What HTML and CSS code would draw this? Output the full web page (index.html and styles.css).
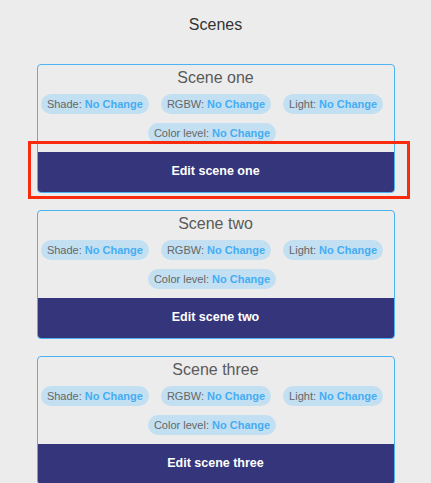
FILE: index.html
```html
<!DOCTYPE html>
<html>
<head>
<meta charset="utf-8">
<link rel="stylesheet" href="styles.css">
</head>
<body>
<div class="page">
  <h1 class="header">Scenes</h1>

  <div class="card">
    <div class="card-title">Scene one</div>
    <div class="chips">
      <span class="chip"><span class="lbl">Shade:</span> <b class="val">No Change</b></span>
      <span class="chip"><span class="lbl">RGBW:</span> <b class="val">No Change</b></span>
      <span class="chip"><span class="lbl">Light:</span> <b class="val">No Change</b></span>
      <span class="chip"><span class="lbl">Color level:</span> <b class="val">No Change</b></span>
    </div>
    <button class="edit">Edit scene one</button>
  </div>

  <div class="card">
    <div class="card-title">Scene two</div>
    <div class="chips">
      <span class="chip"><span class="lbl">Shade:</span> <b class="val">No Change</b></span>
      <span class="chip"><span class="lbl">RGBW:</span> <b class="val">No Change</b></span>
      <span class="chip"><span class="lbl">Light:</span> <b class="val">No Change</b></span>
      <span class="chip"><span class="lbl">Color level:</span> <b class="val">No Change</b></span>
    </div>
    <button class="edit">Edit scene two</button>
  </div>

  <div class="card">
    <div class="card-title">Scene three</div>
    <div class="chips">
      <span class="chip"><span class="lbl">Shade:</span> <b class="val">No Change</b></span>
      <span class="chip"><span class="lbl">RGBW:</span> <b class="val">No Change</b></span>
      <span class="chip"><span class="lbl">Light:</span> <b class="val">No Change</b></span>
      <span class="chip"><span class="lbl">Color level:</span> <b class="val">No Change</b></span>
    </div>
    <button class="edit">Edit scene three</button>
  </div>

  <div class="highlight"></div>
</div>
</body>
</html>
```

FILE: styles.css
```css
html, body {
  margin: 0;
  padding: 0;
  background: #ececec;
  overflow: hidden;
}

body {
  font-family: "Liberation Sans", Arial, sans-serif;
}

.page {
  position: relative;
  padding-top: 14px;
}

.header {
  margin: 0 0 28px 0;
  font-size: 16px;
  line-height: 22px;
  font-weight: normal;
  color: #333333;
  text-align: center;
}

.card {
  width: 356px;
  margin: 0 auto 17px auto;
  border: 1px solid #4db2f2;
  border-radius: 4px;
  overflow: hidden;
  display: flex;
  flex-direction: column;
}

.card-title {
  padding-top: 2px;
  font-size: 16px;
  line-height: 22px;
  color: #5a5a5a;
  text-align: center;
}

.chips {
  display: flex;
  flex-wrap: wrap;
  justify-content: center;
  column-gap: 12px;
  row-gap: 9px;
  padding: 5px 9px 9px 2px;
}

.chip {
  display: inline-block;
  height: 20px;
  line-height: 20px;
  padding: 0 6px;
  border-radius: 10px;
  background: #c3dff2;
  font-size: 11px;
  white-space: nowrap;
}

.lbl {
  color: #666666;
}

.val {
  color: #45adf2;
  font-weight: bold;
}

.edit {
  display: block;
  width: 100%;
  height: 40px;
  margin: 0;
  padding: 0 0 2px 0;
  border: none;
  background: #34357a;
  color: #ffffff;
  font-family: "Liberation Sans", Arial, sans-serif;
  font-size: 12.5px;
  font-weight: bold;
  text-align: center;
}

.highlight {
  position: absolute;
  left: 28px;
  top: 141px;
  width: 382px;
  height: 58px;
  box-sizing: border-box;
  border: 3px solid #fa2a0c;
  pointer-events: none;
}
```
